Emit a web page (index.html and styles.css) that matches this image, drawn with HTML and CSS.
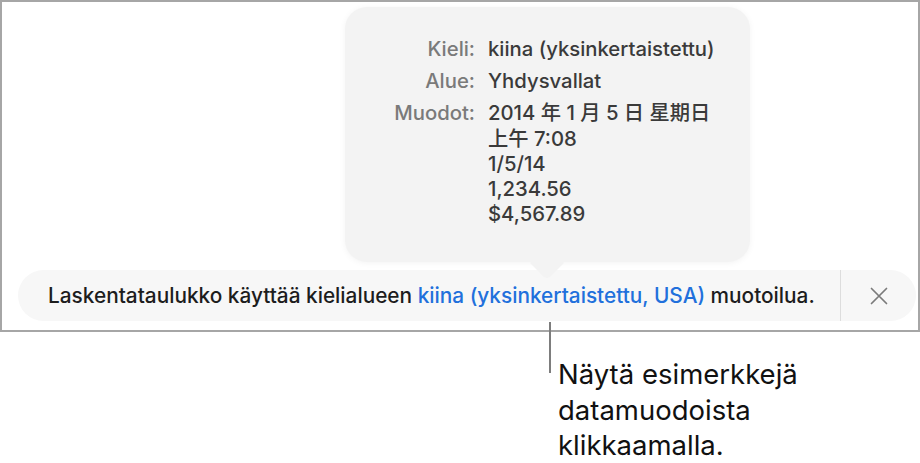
FILE: index.html
```html
<!DOCTYPE html>
<html lang="fi">
<head>
    <meta charset="UTF-8">
    <meta name="viewport" content="width=device-width, initial-scale=1.0">
    <title>Kielialue ja muotoilu</title>
    <link rel="stylesheet" href="styles.css">
</head>
<body>

    <div class="window">
        <!-- Ponnahdusikkuna: esimerkit muodoista -->
        <div class="popover">
            <div class="info-grid">
                <span class="label">Kieli:</span>
                <span class="value">kiina (yksinkertaistettu)</span>

                <span class="label">Alue:</span>
                <span class="value">Yhdysvallat</span>

                <span class="label">Muodot:</span>
                <span class="value lines">
                    <span>2014 年 1 月 5 日 星期日</span>
                    <span>上午 7:08</span>
                    <span>1/5/14</span>
                    <span>1,234.56</span>
                    <span>$4,567.89</span>
                </span>
            </div>
            <div class="arrow"></div>
        </div>

        <!-- Ilmoituspalkki -->
        <div class="notice">
            <p class="notice-text">Laskentataulukko käyttää kielialueen <a href="#" class="link">kiina (yksinkertaistettu, USA)</a> muotoilua.</p>
            <button class="close" aria-label="Sulje">
                <svg width="18" height="18" viewBox="0 0 18 18">
                    <path d="M1.5 1.5 L16.5 16.5 M16.5 1.5 L1.5 16.5" stroke="#7b7b7b" stroke-width="1.7" fill="none" stroke-linecap="round"/>
                </svg>
            </button>
        </div>
    </div>

    <!-- Selite -->
    <div class="callout">
        <div class="callout-line"></div>
        <p class="callout-text">Näytä esimerkkejä<br>datamuodoista<br>klikkaamalla.</p>
    </div>

</body>
</html>
```

FILE: styles.css
```css
body {
    font-family: Inter, "Noto Sans CJK SC", sans-serif;
    margin: 0;
    padding: 0;
    background-color: #fff;
    color: #1d1d1d;
}
.window {
    width: 920px;
    height: 332px;
    box-sizing: border-box;
    border: 2px solid #a6a6a6;
    padding-top: 5px;
}

/* Ponnahdusikkuna */
.popover {
    position: relative;
    margin-left: 343px;
    width: 405px;
    height: 255px;
    box-sizing: border-box;
    padding: 29px 0 0 48px;
    background-color: #f3f3f3;
    border-radius: 22px;
    box-shadow: 0 1px 6px rgba(0, 0, 0, 0.05);
}
.info-grid {
    display: grid;
    grid-template-columns: 82px auto;
    column-gap: 13px;
    row-gap: 7px;
    font-size: 20.3px;
    line-height: 25.2px;
    font-weight: 500;
}
.label {
    text-align: right;
    color: #7a7a7a;
}
.value {
    color: #3a3a3a;
    white-space: nowrap;
}
.lines span {
    display: block;
}
.arrow {
    position: absolute;
    left: 190px;
    bottom: -13px;
    width: 24px;
    height: 24px;
    background-color: #f3f3f3;
    transform: rotate(45deg);
    border-radius: 0 0 5px 0;
}

/* Ilmoituspalkki */
.notice {
    display: flex;
    align-items: center;
    margin: 8px 0 0 16px;
    width: 898px;
    height: 51px;
    background-color: #f7f7f7;
    border-radius: 26px;
}
.notice-text {
    flex: 1;
    margin: 0;
    padding-left: 30px;
    font-size: 20.8px;
    font-weight: 500;
    white-space: nowrap;
}
.link {
    color: #2170dc;
    text-decoration: none;
}
.close {
    width: 76px;
    height: 100%;
    padding: 0;
    border: none;
    border-left: 1px solid #dddddd;
    background: none;
    display: flex;
    align-items: center;
    justify-content: center;
    cursor: pointer;
}

/* Selite */
.callout {
    display: flex;
    margin-left: 549px;
}
.callout-line {
    width: 2px;
    height: 51px;
    margin-top: -10px;
    background-color: #7d7d7d;
}
.callout-text {
    margin: 25px 0 0 7px;
    font-size: 27.5px;
    line-height: 35.5px;
    color: #111;
}
```
